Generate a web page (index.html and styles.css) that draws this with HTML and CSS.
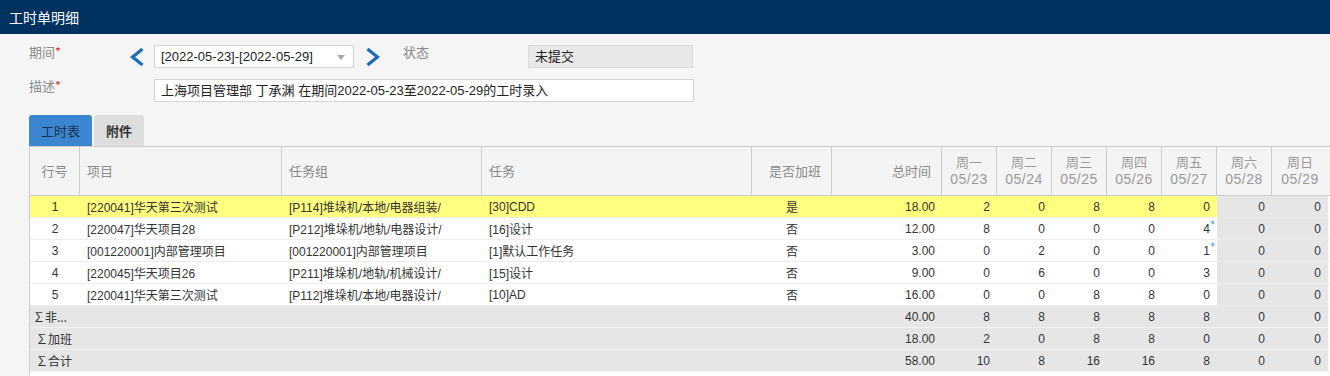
FILE: index.html
```html
<!DOCTYPE html>
<html lang="zh-CN">
<head>
  <meta charset="UTF-8">
  <meta name="viewport" content="width=device-width, initial-scale=1.0">
  <title>工时单明细</title>
  <link rel="stylesheet" href="styles.css">
</head>
<body>

<div class="titlebar">工时单明细</div>

<div class="form">
  <div class="row">
    <label class="lbl">期间<span class="req">*</span></label>
    <span class="nav prev">
      <svg width="14" height="18" viewBox="0 0 14 18"><polyline points="12.5,1 2.5,9 12.5,17"/></svg>
    </span>
    <div class="select">[2022-05-23]-[2022-05-29]<span class="caret"></span></div>
    <span class="nav next">
      <svg width="14" height="18" viewBox="0 0 14 18"><polyline points="1.5,1 11.5,9 1.5,17"/></svg>
    </span>
    <label class="lbl lbl-state">状态</label>
    <div class="status">未提交</div>
  </div>
  <div class="row">
    <label class="lbl lbl-desc">描述<span class="req">*</span></label>
    <div class="input">上海项目管理部 丁承渊 在期间2022-05-23至2022-05-29的工时录入</div>
  </div>
</div>

<div class="tabs">
  <div class="tab active">工时表</div>
  <div class="tab">附件</div>
</div>

<div class="sheet">
  <table class="grid">
    <colgroup>
      <col style="width:50px">
      <col style="width:202px">
      <col style="width:200px">
      <col style="width:270px">
      <col style="width:80px">
      <col style="width:110px">
      <col style="width:55px">
      <col style="width:55px">
      <col style="width:55px">
      <col style="width:55px">
      <col style="width:55px">
      <col style="width:55px">
      <col style="width:56px">
      <col>
    </colgroup>
    <thead>
      <tr>
        <th class="c">行号</th>
        <th>项目</th>
        <th>任务组</th>
        <th>任务</th>
        <th class="r">是否加班</th>
        <th class="r">总时间</th>
        <th class="day"><span>周一</span><span class="date">05/23</span></th>
        <th class="day"><span>周二</span><span class="date">05/24</span></th>
        <th class="day"><span>周三</span><span class="date">05/25</span></th>
        <th class="day"><span>周四</span><span class="date">05/26</span></th>
        <th class="day"><span>周五</span><span class="date">05/27</span></th>
        <th class="day"><span>周六</span><span class="date">05/28</span></th>
        <th class="day last"><span>周日</span><span class="date">05/29</span></th>
        <th class="fill"></th>
      </tr>
    </thead>
    <tbody>
      <tr class="hl">
        <td class="c">1</td>
        <td>[220041]华天第三次测试</td>
        <td>[P114]堆垛机/本地/电器组装/</td>
        <td>[30]CDD</td>
        <td class="c">是</td>
        <td class="r">18.00</td>
        <td class="r">2</td><td class="r">0</td><td class="r">8</td><td class="r">8</td><td class="r">0</td>
        <td class="r we">0</td><td class="r we">0</td><td class="fill"></td>
      </tr>
      <tr>
        <td class="c">2</td>
        <td>[220047]华天项目28</td>
        <td>[P212]堆垛机/地轨/电器设计/</td>
        <td>[16]设计</td>
        <td class="c">否</td>
        <td class="r">12.00</td>
        <td class="r">8</td><td class="r">0</td><td class="r">0</td><td class="r">0</td><td class="r"><span class="mod">4</span></td>
        <td class="r we">0</td><td class="r we">0</td><td class="fill"></td>
      </tr>
      <tr>
        <td class="c">3</td>
        <td>[001220001]内部管理项目</td>
        <td>[001220001]内部管理项目</td>
        <td>[1]默认工作任务</td>
        <td class="c">否</td>
        <td class="r">3.00</td>
        <td class="r">0</td><td class="r">2</td><td class="r">0</td><td class="r">0</td><td class="r"><span class="mod">1</span></td>
        <td class="r we">0</td><td class="r we">0</td><td class="fill"></td>
      </tr>
      <tr>
        <td class="c">4</td>
        <td>[220045]华天项目26</td>
        <td>[P211]堆垛机/地轨/机械设计/</td>
        <td>[15]设计</td>
        <td class="c">否</td>
        <td class="r">9.00</td>
        <td class="r">0</td><td class="r">6</td><td class="r">0</td><td class="r">0</td><td class="r">3</td>
        <td class="r we">0</td><td class="r we">0</td><td class="fill"></td>
      </tr>
      <tr>
        <td class="c">5</td>
        <td>[220041]华天第三次测试</td>
        <td>[P112]堆垛机/本地/电器设计/</td>
        <td>[10]AD</td>
        <td class="c">否</td>
        <td class="r">16.00</td>
        <td class="r">0</td><td class="r">0</td><td class="r">8</td><td class="r">8</td><td class="r">0</td>
        <td class="r we">0</td><td class="r we">0</td><td class="fill"></td>
      </tr>
      <tr class="sum">
        <td class="sum-lbl">∑非...</td>
        <td></td><td></td><td></td><td></td>
        <td class="r">40.00</td>
        <td class="r">8</td><td class="r">8</td><td class="r">8</td><td class="r">8</td><td class="r">8</td>
        <td class="r">0</td><td class="r">0</td><td class="fill"></td>
      </tr>
      <tr class="sum">
        <td class="sum-lbl indent">∑加班</td>
        <td></td><td></td><td></td><td></td>
        <td class="r">18.00</td>
        <td class="r">2</td><td class="r">0</td><td class="r">8</td><td class="r">8</td><td class="r">0</td>
        <td class="r">0</td><td class="r">0</td><td class="fill"></td>
      </tr>
      <tr class="sum">
        <td class="sum-lbl indent">∑合计</td>
        <td></td><td></td><td></td><td></td>
        <td class="r">58.00</td>
        <td class="r">10</td><td class="r">8</td><td class="r">16</td><td class="r">16</td><td class="r">8</td>
        <td class="r">0</td><td class="r">0</td><td class="fill"></td>
      </tr>
    </tbody>
  </table>
</div>

</body>
</html>
```

FILE: styles.css
```css
body {
  margin: 0;
  background: #f5f5f5;
  font-family: "Liberation Sans", "Noto Sans CJK SC", sans-serif;
  color: #333333;
  overflow: hidden;
}
.titlebar {
  height: 34px;
  line-height: 34px;
  padding-left: 9px;
  background: #003260;
  color: #ffffff;
  font-size: 14px;
  font-family: "Noto Sans CJK SC", sans-serif;
}

/* cabeçalho do formulário */
.form {
  padding-left: 29px;
}
.row {
  display: flex;
  align-items: flex-start;
  height: 23px;
  margin-top: 11px;
}
.lbl {
  width: 101px;
  font-size: 13px;
  line-height: 14px;
  color: #8a8a8a;
  font-family: "Noto Sans CJK SC", sans-serif;
}
.lbl-state {
  width: 125px;
  margin-left: 23px;
}
.lbl-desc {
  width: 125px;
}
.req {
  color: #e53935;
}
.nav {
  display: flex;
  align-items: center;
  height: 23px;
}
.nav svg polyline {
  fill: none;
  stroke: #1a6bb8;
  stroke-width: 3.2;
}
.prev {
  margin-right: 10px;
}
.next {
  margin-left: 12px;
}
.select, .input, .status {
  box-sizing: border-box;
  height: 23px;
  line-height: 21px;
  padding-left: 6px;
  border: 1px solid #d4d4d4;
  background: #ffffff;
  font-size: 13px;
  color: #222222;
  position: relative;
}
.select {
  width: 200px;
}
.caret {
  position: absolute;
  right: 8px;
  top: 9px;
  border-top: 5px solid #a8a8a8;
  border-left: 4px solid transparent;
  border-right: 4px solid transparent;
}
.status {
  width: 165px;
  background: #e8e8e8;
  border-color: #dadada;
}
.input {
  width: 540px;
}

/* abas */
.tabs {
  display: flex;
  gap: 2px;
  margin: 13px 0 0 29px;
}
.tab {
  height: 31px;
  line-height: 31px;
  padding: 0 12px;
  border-radius: 3px 3px 0 0;
  background: #dddddd;
  font-size: 13px;
  font-weight: bold;
  color: #333333;
  font-family: "Noto Sans CJK SC", sans-serif;
}
.tab.active {
  background: #3b86cf;
  color: #14304f;
  font-weight: normal;
}

/* grade de horas */
.sheet {
  margin-left: 29px;
  height: 229px;
  background: #ffffff;
  border-left: 1px solid #cccccc;
  border-top: 1px solid #cccccc;
}
.grid {
  width: 100%;
  table-layout: fixed;
  border-collapse: separate;
  border-spacing: 0;
  font-size: 12px;
}
.grid th, .grid td {
  box-sizing: border-box;
  padding: 0 7px;
  white-space: nowrap;
  overflow: hidden;
}
.grid th {
  height: 49px;
  background: #f4f4f4;
  border-right: 1px solid #cccccc;
  border-bottom: 1px solid #cccccc;
  text-align: left;
  font-weight: normal;
  font-size: 13px;
  line-height: 16px;
  color: #8a8a8a;
  font-family: "Noto Sans CJK SC", sans-serif;
}
.grid th.r {
  text-align: right;
  padding-right: 10px;
}
.grid th.c {
  text-align: center;
}
.grid th.day {
  text-align: center;
  padding: 0;
  color: #999999;
  font-family: "Liberation Sans", "Noto Sans CJK SC", sans-serif;
}
.grid th.day span {
  display: block;
  height: 16px;
  line-height: 16px;
}
.grid th.day span.date {
  font-size: 14px;
  letter-spacing: 0.5px;
}
.grid th.last, .grid th.fill {
  border-right: none;
}
.grid td {
  height: 22px;
  border-bottom: 1px solid #ececec;
  color: #333333;
}
.grid td.c {
  text-align: center;
}
.grid td.r {
  text-align: right;
}
.grid td.we {
  background: #e6e6e6;
}
.grid tr.hl td {
  background: #ffff80;
}
.grid tr.hl td.we {
  background: #e6e6e6;
}
.grid tr.hl td.fill, .grid tr.sum td.fill {
  background: #ffffff;
}
.grid tr.sum td {
  background: #e6e6e6;
  border-bottom-color: #f2f2f2;
}
.grid td.sum-lbl {
  padding-left: 3px;
  overflow: visible;
  font-family: "Noto Sans CJK SC", sans-serif;
  line-height: 21px;
}
.grid td.indent {
  padding-left: 6px;
}
.mod {
  position: relative;
}
.mod::after {
  content: "*";
  position: absolute;
  right: -5px;
  top: -4px;
  font-size: 12px;
  color: #3d9cff;
}
```
